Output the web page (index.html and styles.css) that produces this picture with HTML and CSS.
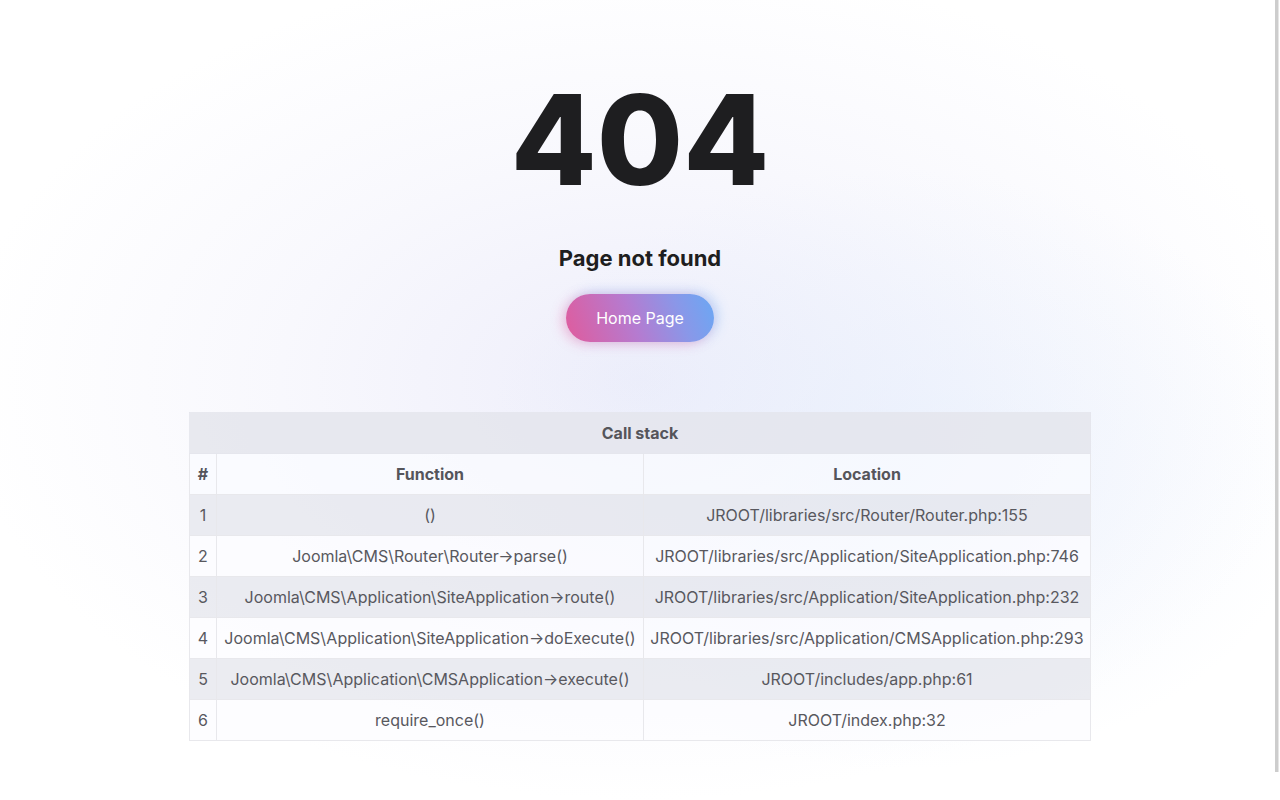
FILE: index.html
```html
<!DOCTYPE html>
<html lang="en">
<head>
<meta charset="utf-8">
<title>404 - Page not found</title>
<link rel="stylesheet" href="styles.css">
</head>
<body>
<main class="page">
  <h1 class="code">404</h1>
  <h2 class="message">Page not found</h2>
  <a class="home-btn" href="#">Home Page</a>
  <table class="stack">
    <thead>
      <tr class="title-row"><th colspan="3">Call stack</th></tr>
      <tr class="head-row">
        <th class="num">#</th>
        <th class="fn">Function</th>
        <th class="loc">Location</th>
      </tr>
    </thead>
    <tbody>
      <tr><td class="num">1</td><td>()</td><td>JROOT/libraries/src/Router/Router.php:155</td></tr>
      <tr><td class="num">2</td><td>Joomla\CMS\Router\Router→parse()</td><td>JROOT/libraries/src/Application/SiteApplication.php:746</td></tr>
      <tr><td class="num">3</td><td>Joomla\CMS\Application\SiteApplication→route()</td><td>JROOT/libraries/src/Application/SiteApplication.php:232</td></tr>
      <tr><td class="num">4</td><td>Joomla\CMS\Application\SiteApplication→doExecute()</td><td>JROOT/libraries/src/Application/CMSApplication.php:293</td></tr>
      <tr><td class="num">5</td><td>Joomla\CMS\Application\CMSApplication→execute()</td><td>JROOT/includes/app.php:61</td></tr>
      <tr><td class="num">6</td><td>require_once()</td><td>JROOT/index.php:32</td></tr>
    </tbody>
  </table>
</main>
<div class="scrollbar"></div>
</body>
</html>
```

FILE: styles.css
```css
html, body {
  margin: 0;
  padding: 0;
  height: 100%;
}
body {
  font-family: Inter, "Noto Sans", "Liberation Sans", sans-serif;
  color: #1e1e20;
  background:
    radial-gradient(ellipse 420px 300px at 900px 470px, rgba(225, 236, 252, 0.55), rgba(255,255,255,0) 100%),
    radial-gradient(ellipse 680px 420px at 640px 380px, rgba(236, 236, 250, 0.9) 0%, rgba(244, 244, 252, 0.6) 55%, rgba(255,255,255,0) 100%),
    #ffffff;
  overflow: hidden;
}
.page {
  display: flex;
  flex-direction: column;
  align-items: center;
  padding-top: 66px;
}
.code {
  margin: 0;
  font-size: 125px;
  line-height: 148px;
  font-weight: 800;
  letter-spacing: 0;
  color: #1e1e20;
}
.message {
  margin: 29px 0 0;
  font-size: 22px;
  line-height: 30px;
  font-weight: 700;
  color: #1e1e20;
}
.home-btn {
  margin-top: 21px;
  display: flex;
  align-items: center;
  justify-content: center;
  width: 148px;
  height: 48px;
  box-sizing: border-box;
  border-radius: 24px;
  color: #fff;
  font-size: 16px;
  text-decoration: none;
  background: linear-gradient(70deg, #e05b9c 0%, #b57bd0 45%, #8a97e8 75%, #6aa8f4 100%);
  box-shadow: -4px 2px 12px rgba(240, 100, 160, 0.35), 4px -2px 12px rgba(100, 170, 245, 0.35);
}
.stack {
  margin-top: 70px;
  width: 902px;
  border-collapse: collapse;
  font-size: 16px;
  color: #58585e;
}
.stack th, .stack td {
  height: 40px;
  padding: 0 5px;
  text-align: center;
  border: 1px solid #e8e8ec;
  white-space: nowrap;
}
.stack th {
  font-weight: 700;
  color: #55555b;
}
.title-row th {
  background: rgba(228, 229, 236, 0.85);
  border-color: rgba(228, 229, 236, 0.85);
}
.head-row th {
  background: rgba(250, 251, 255, 0.75);
}
.stack .num {
  width: 16px;
}
.stack .fn {
  width: 416px;
}
.stack tbody tr:nth-child(odd) td {
  background: rgba(228, 229, 236, 0.75);
}
.stack tbody tr:nth-child(even) td {
  background: rgba(252, 252, 255, 0.7);
}
.scrollbar {
  position: fixed;
  top: 0;
  left: 1275px;
  width: 3px;
  height: 772px;
  background: #cdcdcd;
  border-right: 1px solid #e6e6e6;
}
```
